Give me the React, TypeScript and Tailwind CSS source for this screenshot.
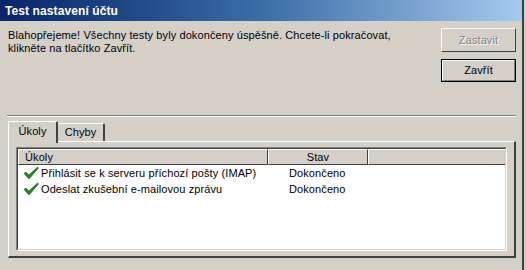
import React from 'react';

const Check = () => (
  <svg width="16" height="14" viewBox="0 0 16 14" className="shrink-0">
    <path d="M1 7.5 L3 6 L6 9 L14.5 1 L15.5 2 L6.5 12.5 L5.5 12.5 Z" fill="#1f8a1f" stroke="#0b5e0b" strokeWidth="0.6" strokeLinejoin="round" />
  </svg>
);

const rows = [
  { task: 'Přihlásit se k serveru příchozí pošty (IMAP)', status: 'Dokončeno' },
  { task: 'Odeslat zkušební e-mailovou zprávu', status: 'Dokončeno' },
];

export default function App() {
  return (
    <div
      className="w-[526px] h-[270px] bg-[#d4d0c8] overflow-hidden text-[11px] tracking-[0.1px] text-black"
      style={{ fontFamily: '"Liberation Sans", Arial, sans-serif' }}
    >
      <div className="w-[524px] h-[270px] border-r-2 border-r-[#404040] flex flex-col">
        {/* title bar */}
        <div className="h-[21px] bg-gradient-to-r from-[#0a246a] via-[#3a6ea5] to-[#a6caf0] flex items-center pl-[5px]">
          <span className="text-white font-bold text-[12px] leading-none">Test nastavení účtu</span>
        </div>

        {/* message + buttons */}
        <div className="flex h-[94px]">
          <div className="flex-1 pl-[8px] pt-[8px] leading-[13px]">
            <p>Blahopřejeme! Všechny testy byly dokončeny úspěšně. Chcete-li pokračovat,</p>
            <p>klikněte na tlačítko Zavřít.</p>
          </div>
          <div className="w-[75px] mr-[6px] pt-[7px] flex flex-col gap-[7px]">
            <div className="h-[24px] border border-t-white border-l-white border-r-[#404040] border-b-[#404040] flex items-center justify-center text-[#808080] [text-shadow:1px_1px_0_#ffffff]">
              Zastavit
            </div>
            <div className="h-[23px] border border-black">
              <div className="h-full border border-t-white border-l-white border-r-[#808080] border-b-[#808080] flex items-center justify-center">
                Zavřít
              </div>
            </div>
          </div>
        </div>

        {/* separator */}
        <div className="ml-[7px] mr-[6px] border-t border-t-[#808080] border-b border-b-white" />

        {/* tabs */}
        <div className="flex flex-col pl-[8px] pr-[6px] pt-[4px]">
          <div className="flex items-end h-[20px] relative z-10">
            <div className="w-[50px] h-[22px] bg-[#d4d0c8] border-t border-l border-t-white border-l-white border-r-2 border-r-[#404040] rounded-t-[2px] flex items-center justify-center -mb-[2px] pb-[2px]">
              Úkoly
            </div>
            <div className="w-[47px] h-[18px] border-t border-t-white border-r-2 border-r-[#404040] rounded-t-[2px] flex items-center justify-center">
              Chyby
            </div>
          </div>
          <div className="h-[117px] border-t border-l border-t-white border-l-white border-r-2 border-b-2 border-r-[#404040] border-b-[#404040] p-[5px] pl-[7px] pr-[7px]">
            {/* list view */}
            <div className="h-[104px] border-t border-l border-t-[#808080] border-l-[#808080] border-r border-b border-r-white border-b-white">
              <div className="h-full border-t border-l border-t-[#404040] border-l-[#404040] border-r border-b border-r-[#d4d0c8] border-b-[#d4d0c8] bg-white flex flex-col">
                <div className="flex h-[16px] shrink-0 bg-[#d4d0c8]">
                  <div className="w-[250px] border-t border-l border-t-white border-l-white border-r border-b border-r-[#404040] border-b-[#404040] pl-[6px] leading-[14px]">
                    Úkoly
                  </div>
                  <div className="w-[100px] border-t border-l border-t-white border-l-white border-r border-b border-r-[#404040] border-b-[#404040] text-center leading-[14px]">
                    Stav
                  </div>
                  <div className="flex-1 border-t border-l border-t-white border-l-white border-b border-b-[#404040]" />
                </div>
                {rows.map((r) => (
                  <div key={r.task} className="flex h-[16px] shrink-0 items-center whitespace-nowrap">
                    <div className="w-[250px] flex items-center pl-[5px] gap-[2px]">
                      <Check />
                      <span>{r.task}</span>
                    </div>
                    <div className="pl-[21px]">{r.status}</div>
                  </div>
                ))}
              </div>
            </div>
          </div>
        </div>
      </div>
    </div>
  );
}
